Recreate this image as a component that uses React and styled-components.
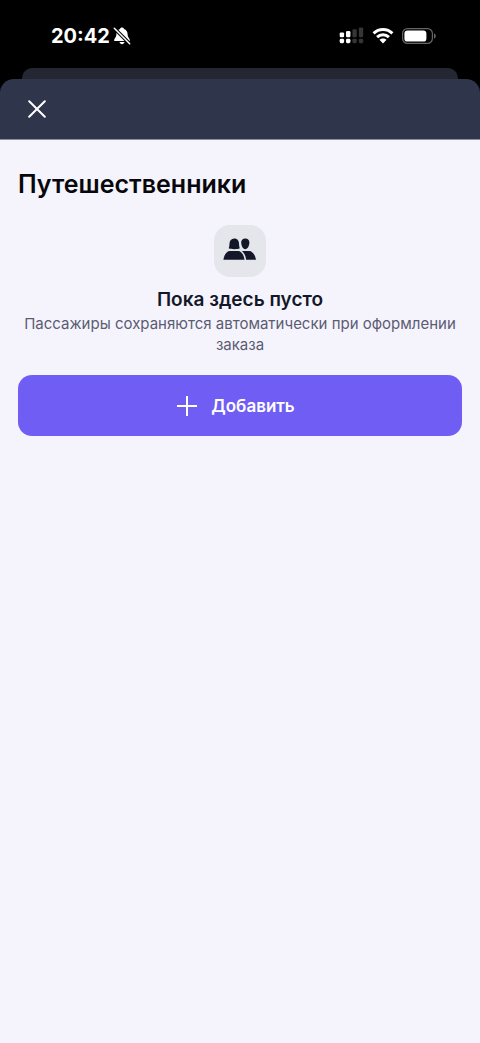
import styled, { createGlobalStyle } from 'styled-components'

const GlobalStyle = createGlobalStyle`
    * {
        box-sizing: border-box;
    }

    body {
        margin: 0;
        background: #000000;
        font-family: Inter, "Noto Sans", sans-serif;
    }
`;

const Screen = styled.div`
    display: flex;
    flex-direction: column;
    min-height: 100vh;
    background: #000000;
`;

const StatusBar = styled.div`
    display: flex;
    align-items: center;
    justify-content: space-between;
    height: 68px;
    padding: 3px 44px 0 51px;
    color: #ffffff;
`;

const StatusGroup = styled.div`
    display: flex;
    align-items: center;
    gap: ${(props) => props.$gap}px;
`;

const Time = styled.span`
    font-size: 20px;
    font-weight: 700;
    line-height: 24px;
`;

const BackSheet = styled.div`
    height: 11px;
    margin: 0 22px;
    border-radius: 10px 10px 0 0;
    background: #242632;
`;

const Sheet = styled.div`
    display: flex;
    flex: 1;
    flex-direction: column;
`;

const SheetHeader = styled.header`
    display: flex;
    align-items: center;
    height: 61px;
    padding: 0 22px;
    border-bottom: 1px solid #8d8fa0;
    border-radius: 14px 14px 0 0;
    background: #2f354b;
`;

const CloseButton = styled.button`
    display: flex;
    align-items: center;
    justify-content: center;
    width: 30px;
    height: 30px;
    padding: 0;
    border: none;
    background: none;
    color: #ffffff;
    cursor: pointer;
`;

const Content = styled.main`
    flex: 1;
    padding: 27px 18px;
    background: #f5f4fd;
`;

const Title = styled.h1`
    margin: 0;
    color: #08080c;
    font-size: 25px;
    font-weight: 600;
    line-height: 34px;
`;

const Empty = styled.section`
    display: flex;
    flex-direction: column;
    align-items: center;
    padding: 24px 0 20px;
    text-align: center;
`;

const EmptyIcon = styled.div`
    display: flex;
    align-items: center;
    justify-content: center;
    width: 52px;
    height: 52px;
    margin-bottom: 10px;
    border-radius: 16px;
    background: #e4e6eb;
    color: #141729;
`;

const EmptyTitle = styled.h2`
    margin: 0;
    color: #141729;
    font-size: 19px;
    font-weight: 600;
    line-height: 26px;
`;

const EmptyText = styled.p`
    margin: 0;
    color: #5b5c72;
    font-size: 15px;
    line-height: 21px;
`;

const AddButton = styled.button`
    display: flex;
    align-items: center;
    justify-content: center;
    gap: 14px;
    width: 100%;
    height: 61px;
    padding: 0 8px 0 0;
    border: none;
    border-radius: 14px;
    background: #705df4;
    color: #ffffff;
    font-family: inherit;
    font-size: 17px;
    font-weight: 600;
    line-height: 24px;
    cursor: pointer;
`;

const BellOffIcon = () => (
    <svg width="18" height="18" viewBox="0 0 18 18" aria-hidden="true">
        <path d="M9 0.6C10 0.6 10.8 1.2 11 2C13.3 2.8 14.6 4.8 14.6 7.2C14.6 10.4 16.8 11.3 16.8 13V14H1.2V13C1.2 11.3 3.4 10.4 3.4 7.2C3.4 4.8 4.7 2.8 7 2C7.2 1.2 8 0.6 9 0.6Z" fill="#fff" />
        <path d="M6.5 15H11.5C11.2 16.4 10.2 17.2 9 17.2C7.8 17.2 6.8 16.4 6.5 15Z" fill="#fff" />
        <path d="M0.5 0.5L17.5 17.5" stroke="#000" strokeWidth="3.6" />
        <path d="M1.3 1.3L16.7 16.7" stroke="#fff" strokeWidth="1.5" strokeLinecap="round" />
    </svg>
)

const SignalIcon = () => (
    <svg width="25" height="17" viewBox="0 0 25 17" aria-hidden="true">
        <g fill="#fff">
            <rect x="0.7" y="5.4" width="4.4" height="4.8" rx="1.2" />
            <rect x="0.7" y="11.8" width="4.4" height="4.4" rx="1.4" />
            <rect x="7" y="4" width="4.4" height="6.2" rx="1.2" />
            <rect x="7" y="11.8" width="4.4" height="4.4" rx="1.4" />
        </g>
        <g fill="#353535">
            <rect x="13.4" y="2.2" width="4.4" height="8" rx="1.2" />
            <rect x="13.4" y="11.8" width="4.4" height="4.4" rx="1.4" />
            <rect x="19.8" y="0.4" width="4.4" height="9.8" rx="1.2" />
            <rect x="19.8" y="11.8" width="4.4" height="4.4" rx="1.4" />
        </g>
    </svg>
)

const WifiIcon = () => (
    <svg width="22" height="16" viewBox="0 0 22 16" fill="none" stroke="#fff" strokeWidth="3" aria-hidden="true">
        <path d="M1.6 5.4C6.8 0.3 15.2 0.3 20.4 5.4" />
        <path d="M5.1 9.2C8.4 6 13.6 6 16.9 9.2" />
        <path d="M11 15.4L7.4 11.8C9.5 9.9 12.5 9.9 14.6 11.8Z" fill="#fff" stroke="none" />
    </svg>
)

const BatteryIcon = () => (
    <svg width="34" height="16" viewBox="0 0 34 16" aria-hidden="true">
        <rect x="0.6" y="0.6" width="29.8" height="14.8" rx="4.8" fill="none" stroke="#666" strokeWidth="1.2" />
        <rect x="2.4" y="2.4" width="22" height="11.2" rx="3.2" fill="#fff" />
        <path d="M32 5.4C33.2 5.9 33.8 6.9 33.8 8C33.8 9.1 33.2 10.1 32 10.6Z" fill="#666" />
    </svg>
)

const CloseIcon = () => (
    <svg width="18" height="18" viewBox="0 0 18 18" stroke="currentColor" strokeWidth="2" strokeLinecap="round" aria-hidden="true">
        <path d="M1.2 1.2L16.8 16.8M16.8 1.2L1.2 16.8" />
    </svg>
)

const TravellersIcon = () => (
    <svg width="34" height="26" viewBox="0 0 34 26" fill="currentColor" aria-hidden="true">
        <path d="M11.3 0.6C14.4 0.6 15.9 2.8 16 5.6C16.1 7.8 16.3 9.2 16.8 10.3C15.5 11 13.8 11.2 11.3 11.2C8.8 11.2 7 11 5.7 10.3C6.2 9.2 6.4 7.8 6.5 5.6C6.6 2.8 8.2 0.6 11.3 0.6Z" />
        <path d="M22.3 0.6C24.9 0.6 26.6 2.3 26.4 4.8C26.2 8 24.6 11.2 22.3 11.2C20 11.2 18.4 8 18.2 4.8C18 2.3 19.7 0.6 22.3 0.6Z" />
        <path d="M0.4 21.8C1 17 3.6 13 7 13H15C18.4 13 20.9 17 21.5 21.8Z" />
        <path d="M18.9 13H26C29.6 13 32.2 17 33 21.8H23.1C22.8 18.2 21.2 15 18.9 13Z" />
    </svg>
)

const PlusIcon = () => (
    <svg width="20" height="20" viewBox="0 0 20 20" stroke="currentColor" strokeWidth="2" aria-hidden="true">
        <path d="M10 0V20M0 10H20" />
    </svg>
)

export default function App() {
    return (
        <>
            <GlobalStyle />
            <Screen>
                <StatusBar>
                    <StatusGroup $gap={3}>
                        <Time>20:42</Time>
                        <BellOffIcon />
                    </StatusGroup>
                    <StatusGroup $gap={8}>
                        <SignalIcon />
                        <WifiIcon />
                        <BatteryIcon />
                    </StatusGroup>
                </StatusBar>
                <BackSheet />
                <Sheet>
                    <SheetHeader>
                        <CloseButton type="button" aria-label="Закрыть">
                            <CloseIcon />
                        </CloseButton>
                    </SheetHeader>
                    <Content>
                        <Title>Путешественники</Title>
                        <Empty>
                            <EmptyIcon>
                                <TravellersIcon />
                            </EmptyIcon>
                            <EmptyTitle>Пока здесь пусто</EmptyTitle>
                            <EmptyText>Пассажиры сохраняются автоматически при оформлении заказа</EmptyText>
                        </Empty>
                        <AddButton type="button">
                            <PlusIcon />
                            Добавить
                        </AddButton>
                    </Content>
                </Sheet>
            </Screen>
        </>
    )
}
